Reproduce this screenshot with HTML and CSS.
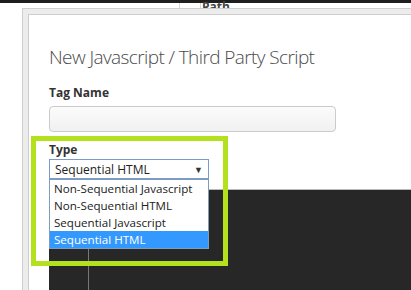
FILE: index.html
```html
<!DOCTYPE html>
<html lang="en">
<head>
    <meta charset="UTF-8">
    <meta name="viewport" content="width=device-width, initial-scale=1.0">
    <title>New Javascript / Third Party Script</title>
    <link rel="stylesheet" href="styles.css">
</head>
<body>
    <div class="topbar"></div>
    <div class="page-header">
        <div class="col col-a"></div>
        <div class="col col-b"></div>
        <div class="col col-c">Path</div>
    </div>

    <div class="modal-frame">
        <div class="dialog">
            <h2 class="dialog-title">New Javascript / Third Party Script</h2>

            <label class="field-label" for="tag-name">Tag Name</label>
            <div class="text-input" id="tag-name"></div>

            <div class="field-label">Type</div>
            <div class="select-wrap">
                <div class="select-box">
                    <span>Sequential HTML</span>
                    <span class="select-arrow">&#9660;</span>
                </div>
                <ul class="select-list">
                    <li>Non-Sequential Javascript</li>
                    <li>Non-Sequential HTML</li>
                    <li>Sequential Javascript</li>
                    <li class="selected">Sequential HTML</li>
                </ul>
            </div>

            <div class="code-editor">
                <div class="gutter"></div>
            </div>
        </div>
    </div>

    <!-- highlight around the type field -->
    <div class="callout"></div>
</body>
</html>
```

FILE: styles.css
```css
body {
    margin: 0;
    width: 411px;
    height: 290px;
    overflow: hidden;
    position: relative;
    background: #fff;
    font-family: "Open Sans", "Liberation Sans", sans-serif;
    color: #333;
}
.topbar {
    height: 3px;
    background-color: #1e1e1e;
}
.page-header {
    display: flex;
    height: 6px;
    padding-left: 179px;
}
.col {
    border-left: 1px solid #d6d6d6;
}
.col-a {
    width: 20px;
}
.col-b {
    width: 0;
}
.col-c {
    border-left: none;
    padding-left: 11px;
    margin-left: -10px;
    font-size: 12px;
    font-weight: bold;
    line-height: 10px;
    margin-top: -1px;
    color: #444;
}
.modal-frame {
    position: absolute;
    left: 22px;
    top: 8px;
    right: -20px;
    bottom: -20px;
    background-color: #ececec;
    border: 1px solid #cfcfcf;
    padding: 5px;
}
.dialog {
    height: 100%;
    background-color: #fff;
    border: 1px solid #cdcdcd;
    padding: 30px 0 0 20px;
    box-sizing: border-box;
}
.dialog-title {
    margin: 0 0 16px 0;
    font-size: 19px;
    font-weight: 300;
    letter-spacing: -0.6px;
    line-height: 24px;
    color: #4b4b4b;
}
.field-label {
    display: block;
    font-size: 12px;
    font-weight: bold;
    line-height: 16px;
    color: #333;
}
.text-input {
    width: 285px;
    height: 24px;
    margin-top: 5px;
    margin-bottom: 10px;
    border: 1px solid #cbcbcb;
    border-radius: 4px;
    background: linear-gradient(#fbfbfb, #f1f1f1);
}
.select-wrap {
    position: relative;
    width: 160px;
    margin-top: 1px;
}
.select-box {
    display: flex;
    justify-content: space-between;
    align-items: center;
    height: 18px;
    padding: 0 5px;
    border: 1px solid #7b9bcf;
    font-size: 12px;
    color: #222;
}
.select-arrow {
    font-size: 9px;
    color: #333;
}
.select-list {
    position: absolute;
    top: 20px;
    left: 0;
    width: 158px;
    margin: 0;
    padding: 0;
    list-style: none;
    background-color: #fff;
    border: 1px solid #7f9db9;
    z-index: 2;
}
.select-list li {
    height: 17px;
    line-height: 17px;
    padding-left: 4px;
    font-size: 11.6px;
    color: #222;
}
.select-list li.selected {
    background-color: #3399ff;
    color: #fff;
}
.code-editor {
    height: 120px;
    margin-top: 10px;
    background-color: #272727;
    border-top: 1px solid #bbb;
}
.gutter {
    width: 39px;
    height: 100%;
    border-right: 1px solid #777;
}
.callout {
    position: absolute;
    left: 31px;
    top: 136px;
    width: 187px;
    height: 120px;
    border: 5px solid #b4e11e;
    z-index: 3;
}
```
